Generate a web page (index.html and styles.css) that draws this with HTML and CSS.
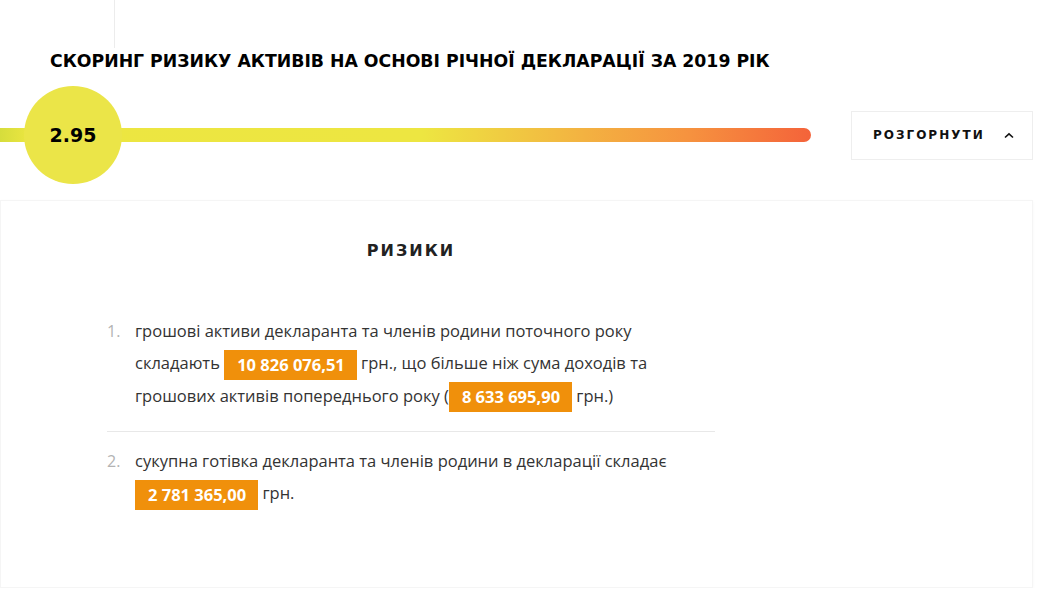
FILE: index.html
```html
<!DOCTYPE html>
<html lang="uk">
<head>
  <meta charset="UTF-8">
  <title>Скоринг ризику активів</title>
  <link rel="stylesheet" href="styles.css">
</head>
<body>

  <div class="top-rule"></div>

  <h1 class="title">Скоринг ризику активів на основі річної декларації за 2019 рік</h1>

  <!-- score bar -->
  <div class="score-row">
    <div class="track">
      <div class="score">2.95</div>
    </div>
    <button class="toggle">
      <span>Розгорнути</span>
      <svg width="10" height="7" viewBox="0 0 10 7"><path d="M1 5.5 L5 1.8 L9 5.5" fill="none" stroke="#111" stroke-width="1.6"/></svg>
    </button>
  </div>

  <!-- risks panel -->
  <div class="panel">
    <div class="risks">
      <h2>Ризики</h2>
      <ol class="risk-list">
        <li>
          <span class="num">1.</span>
          <p>грошові активи декларанта та членів родини поточного року складають <span class="sum">10 826 076,51</span> грн., що більше ніж сума доходів та грошових активів попереднього року (<span class="sum">8 633 695,90</span> грн.)</p>
        </li>
        <li>
          <span class="num">2.</span>
          <p>сукупна готівка декларанта та членів родини в декларації складає <span class="sum">2 781 365,00</span> грн.</p>
        </li>
      </ol>
    </div>
  </div>

</body>
</html>
```

FILE: styles.css
```css
* {
  box-sizing: border-box;
  margin: 0;
  padding: 0;
}

body {
  background: #fff;
  color: #222;
  font-family: "Open Sans", Arial, sans-serif;
  width: 1058px;
  overflow: hidden;
}

.top-rule {
  margin-left: 114px;
  width: 1px;
  height: 48px;
  background: #ececec;
}

.title {
  margin-left: 50px;
  font-family: "DejaVu Sans", sans-serif;
  font-size: 17.3px;
  font-weight: 700;
  line-height: 26px;
  text-transform: uppercase;
  color: #000;
}

.score-row {
  display: flex;
  align-items: center;
  height: 98px;
  margin-top: 12px;
}

.track {
  position: relative;
  width: 811px;
  height: 14px;
  border-radius: 0 7px 7px 0;
  background: linear-gradient(to right, #d6dd3c 0, #ece641 30px, #ede641 52%, #f3b241 72%, #f6923f 85%, #f4633a 100%);
}

.score {
  position: absolute;
  left: 24px;
  top: -42px;
  width: 98px;
  height: 98px;
  border-radius: 50%;
  background: #ebe548;
  display: flex;
  align-items: center;
  justify-content: center;
  font-family: "DejaVu Sans", sans-serif;
  font-weight: 700;
  font-size: 19px;
  color: #000;
}

.toggle {
  margin-left: 40px;
  width: 182px;
  height: 49px;
  display: flex;
  align-items: center;
  justify-content: space-between;
  padding: 0 18px 0 21px;
  background: #fff;
  border: 1px solid #eee;
  font-family: "DejaVu Sans", sans-serif;
  font-size: 12px;
  font-weight: 700;
  letter-spacing: 2px;
  text-transform: uppercase;
  color: #111;
}

.panel {
  margin-top: 16px;
  width: 1033px;
  height: 388px;
  border: 1px solid #f5f5f5;
  box-shadow: 0 1px 3px rgba(0, 0, 0, 0.03);
}

.risks {
  width: 608px;
  margin-left: 106px;
  padding-top: 40px;
}

.risks h2 {
  text-align: center;
  font-family: "DejaVu Sans", sans-serif;
  font-size: 16px;
  font-weight: 700;
  letter-spacing: 2px;
  text-transform: uppercase;
  color: #222;
}

.risk-list {
  list-style: none;
  margin-top: 51px;
}

.risk-list li {
  display: flex;
  padding: 4px 0 19px;
}

.risk-list li + li {
  border-top: 1px solid #e8e8e8;
  padding-top: 13px;
}

.num {
  width: 28px;
  flex-shrink: 0;
  color: #b3b3b3;
  font-size: 16px;
  line-height: 32px;
}

.risk-list p {
  font-size: 16.5px;
  line-height: 32px;
  color: #333;
  padding-right: 20px;
}

.sum {
  display: inline-block;
  vertical-align: middle;
  height: 30px;
  line-height: 30px;
  padding: 0 12px 0 13px;
  background: #f0900b;
  color: #fff;
  font-weight: 700;
}
```
